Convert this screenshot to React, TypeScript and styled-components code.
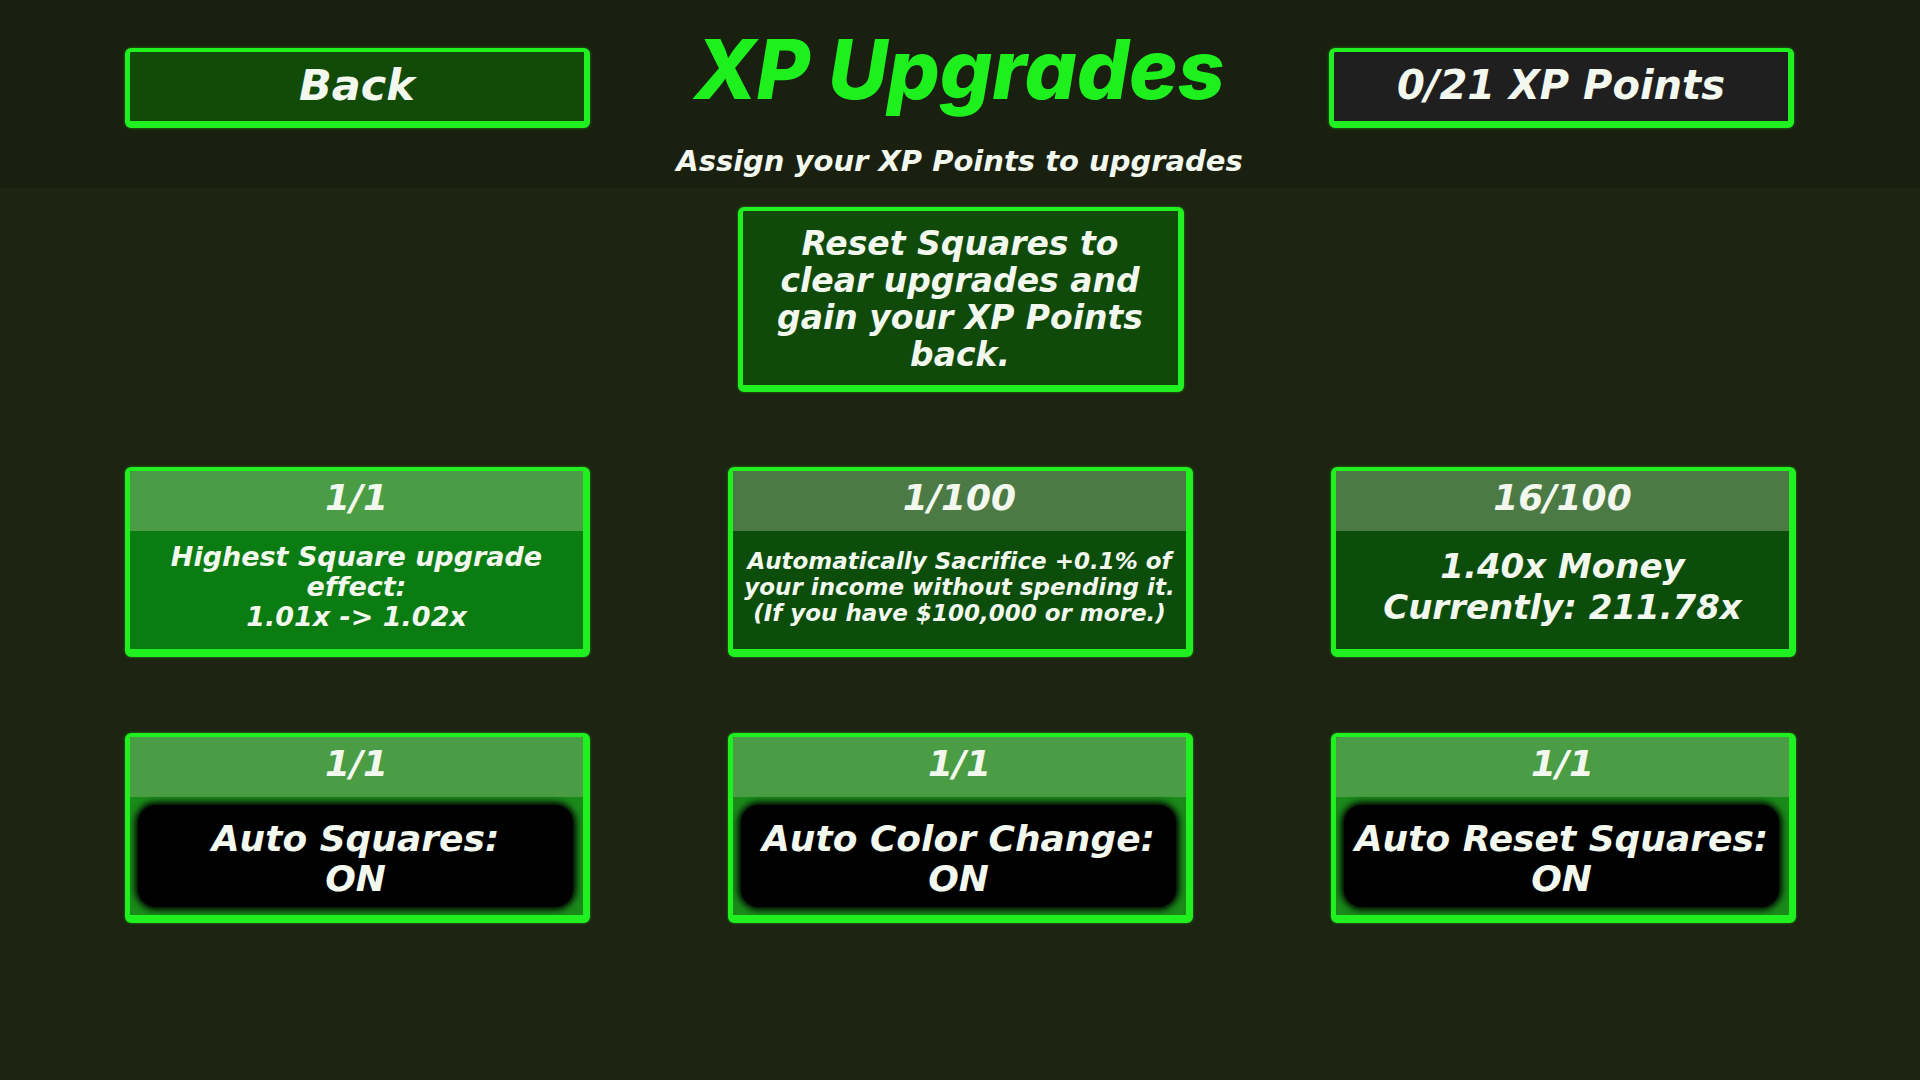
import React from "react";
import styled, { createGlobalStyle, css } from "styled-components";

const GlobalStyle = createGlobalStyle`
  html, body { margin: 0; padding: 0; background: #1c2310; }
  body { font-family: "DejaVu Sans", Inter, "Noto Sans", sans-serif; }
  * { box-sizing: border-box; }
`;

const NEON = "#20f020";

const Page = styled.div`
  width: 1920px;
  height: 1080px;
  overflow: hidden;
  background: #1d2411;
  display: flex;
  flex-direction: column;
  color: #f3f8ef;
  font-style: oblique;
  font-weight: 700;
  font-feature-settings: "calt" 0, "liga" 0;
`;

const TopBand = styled.header`
  height: 188px;
  background: #1a200f;
  display: grid;
  grid-template-columns: 465px 1fr 465px;
  padding: 0 126px 0 125px;
  align-items: start;
`;

const neonBox = css`
  border-style: solid;
  border-color: ${NEON};
  border-width: 4px 6px 7px 5px;
  border-radius: 6px;
  box-shadow: 0 0 3px rgba(40, 255, 40, 0.45);
`;

const SideButton = styled.div<{ $dark?: boolean }>`
  ${neonBox};
  margin-top: 48px;
  height: 80px;
  background: ${(p) => (p.$dark ? "#1f1f1f" : "#124a08")};
  display: flex;
  align-items: center;
  justify-content: center;
  font-size: ${(p) => (p.$dark ? 40 : 43)}px;
  padding-bottom: 4px;
`;

const TitleBlock = styled.div`
  display: flex;
  flex-direction: column;
  align-items: center;
`;

const Title = styled.h1`
  margin: 20px 0 0;
  font-family: Inter, "DejaVu Sans", sans-serif;
  font-style: italic;
  font-size: 82px;
  line-height: 100px;
  font-weight: 800;
  color: #1ef01e;
`;

const Subtitle = styled.div`
  margin-top: 24px;
  font-size: 29px;
  line-height: 34px;
`;

const Main = styled.main`
  display: flex;
  flex-direction: column;
  align-items: center;
  padding: 19px 124px 0 125px;
`;

const ResetBox = styled.div`
  ${neonBox};
  width: 446px;
  height: 185px;
  background: #0f4a0b;
  display: flex;
  align-items: center;
  justify-content: center;
  text-align: center;
  font-size: 33px;
  line-height: 37px;
  padding-top: 2px;
`;

const CardGrid = styled.div`
  margin-top: 75px;
  align-self: stretch;
  display: grid;
  grid-template-columns: repeat(3, 465px);
  column-gap: 138px;
  row-gap: 76px;
`;

const Card = styled.div`
  ${neonBox};
  border-width: 4px 7px 8px 5px;
  height: 190px;
  display: flex;
  flex-direction: column;
  overflow: hidden;
`;

const CardHead = styled.div<{ $muted?: boolean }>`
  height: 60px;
  flex: none;
  background: ${(p) => (p.$muted ? "#4b7a44" : "#4a9d44")};
  display: flex;
  align-items: center;
  justify-content: center;
  font-size: 36px;
  padding-bottom: 8px;
`;

const CardBody = styled.div<{ $tone: "bright" | "dark" | "toggle"; $size: number; $lh: number }>`
  flex: 1;
  display: flex;
  align-items: center;
  justify-content: center;
  text-align: center;
  font-size: ${(p) => p.$size}px;
  line-height: ${(p) => p.$lh}px;
  background: ${(p) =>
    p.$tone === "bright" ? "#0b7c12" : p.$tone === "dark" ? "#0c4d0c" : "#1a8a1a"};
  padding: ${(p) => (p.$tone === "toggle" ? "8px 10px 8px 8px" : "0 2px 6px")};
`;

const ToggleInner = styled.div`
  width: 100%;
  height: 100%;
  border-radius: 18px;
  background: #000;
  box-shadow: 0 0 6px 3px #000;
  display: flex;
  align-items: center;
  justify-content: center;
  text-align: center;
  font-size: 36px;
  line-height: 40px;
  padding-top: 6px;
`;

type Upgrade = {
  level: string;
  muted?: boolean;
  tone: "bright" | "dark";
  size: number;
  lh: number;
  lines: string[];
};

const upgrades: Upgrade[] = [
  {
    level: "1/1",
    tone: "bright",
    size: 27,
    lh: 30,
    lines: ["Highest Square upgrade", "effect:", "1.01x -> 1.02x"],
  },
  {
    level: "1/100",
    muted: true,
    tone: "dark",
    size: 23,
    lh: 26,
    lines: [
      "Automatically Sacrifice +0.1% of",
      "your income without spending it.",
      "(If you have $100,000 or more.)",
    ],
  },
  {
    level: "16/100",
    muted: true,
    tone: "dark",
    size: 34,
    lh: 41,
    lines: ["1.40x Money", "Currently: 211.78x"],
  },
];

const toggles = [
  ["Auto Squares:", "ON"],
  ["Auto Color Change:", "ON"],
  ["Auto Reset Squares:", "ON"],
];

const Lines: React.FC<{ lines: string[] }> = ({ lines }) => (
  <div>
    {lines.map((l, i) => (
      <React.Fragment key={i}>
        {i > 0 && <br />}
        {l}
      </React.Fragment>
    ))}
  </div>
);

export default function App() {
  return (
    <>
      <GlobalStyle />
      <Page>
        <TopBand>
          <SideButton>Back</SideButton>
          <TitleBlock>
            <Title>XP Upgrades</Title>
            <Subtitle>Assign your XP Points to upgrades</Subtitle>
          </TitleBlock>
          <SideButton $dark>0/21 XP Points</SideButton>
        </TopBand>
        <Main>
          <ResetBox>
            <Lines lines={["Reset Squares to", "clear upgrades and", "gain your XP Points", "back."]} />
          </ResetBox>
          <CardGrid>
            {upgrades.map((u, i) => (
              <Card key={i}>
                <CardHead $muted={u.muted}>{u.level}</CardHead>
                <CardBody $tone={u.tone} $size={u.size} $lh={u.lh}>
                  <Lines lines={u.lines} />
                </CardBody>
              </Card>
            ))}
            {toggles.map((t, i) => (
              <Card key={`t${i}`}>
                <CardHead>1/1</CardHead>
                <CardBody $tone="toggle" $size={36} $lh={40}>
                  <ToggleInner>
                    <Lines lines={t} />
                  </ToggleInner>
                </CardBody>
              </Card>
            ))}
          </CardGrid>
        </Main>
      </Page>
    </>
  );
}
